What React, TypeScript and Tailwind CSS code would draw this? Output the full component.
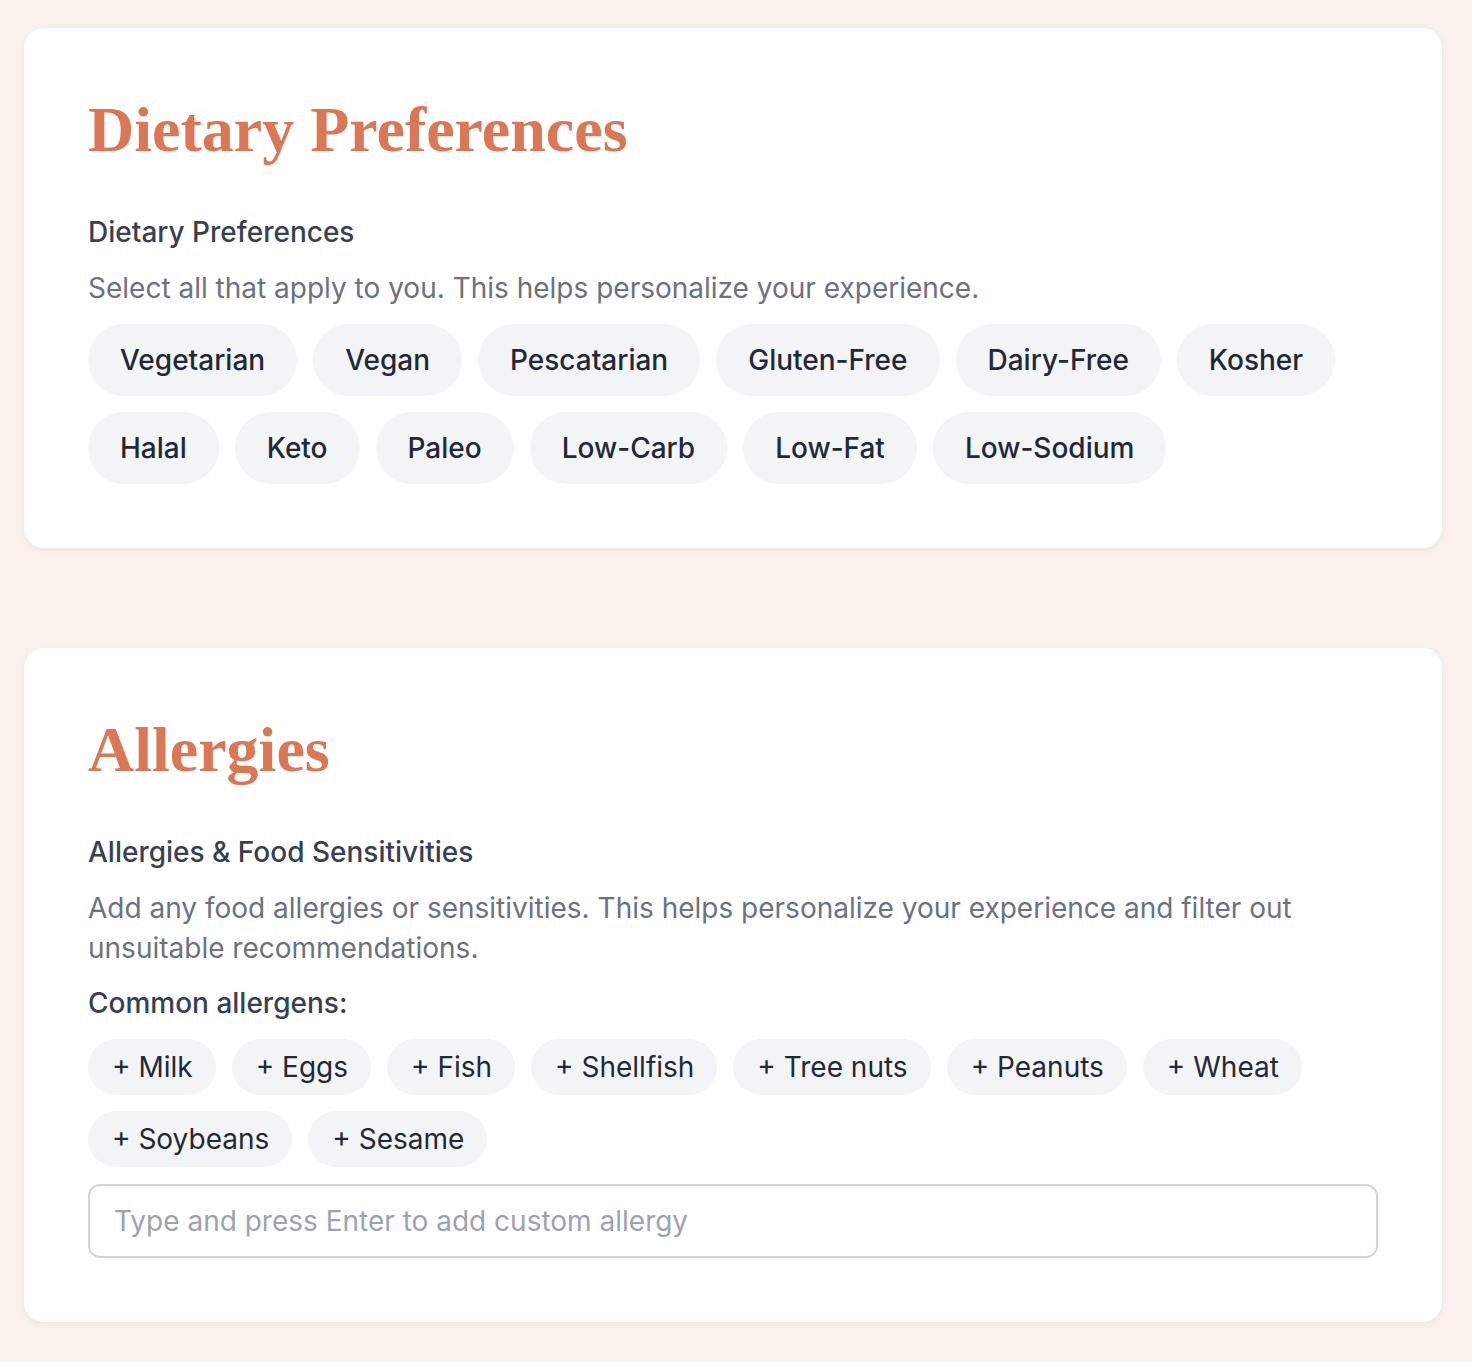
import React, { useState } from 'react';

const DIETS = [
  'Vegetarian',
  'Vegan',
  'Pescatarian',
  'Gluten-Free',
  'Dairy-Free',
  'Kosher',
  'Halal',
  'Keto',
  'Paleo',
  'Low-Carb',
  'Low-Fat',
  'Low-Sodium',
];

const ALLERGENS = ['Milk', 'Eggs', 'Fish', 'Shellfish', 'Tree nuts', 'Peanuts', 'Wheat', 'Soybeans', 'Sesame'];

const Card: React.FC<{ title: string; children: React.ReactNode }> = ({ title, children }) => (
  <section className="bg-white rounded-[20px] p-16 shadow-[0_2px_6px_rgba(214,140,115,0.14)]">
    <h2 className="font-['Liberation_Serif',serif] font-bold text-[64px] leading-[76px] text-[#d97757] mb-[46px]">
      {title}
    </h2>
    {children}
  </section>
);

export default function App() {
  const [selected, setSelected] = useState<string[]>([]);
  const [custom, setCustom] = useState('');

  const toggle = (d: string) =>
    setSelected((prev) => (prev.includes(d) ? prev.filter((x) => x !== d) : [...prev, d]));

  return (
    <div className="min-h-screen bg-[#faf1ec] pl-6 pr-[30px] pt-7 pb-9 font-['Inter',sans-serif]">
      <div className="flex flex-col gap-[100px]">
        <Card title="Dietary Preferences">
          <p className="text-[28px] leading-9 font-medium text-[#374151] mb-[18px]">Dietary Preferences</p>
          <p className="text-[28px] leading-10 text-[#6b7280] mb-4">
            Select all that apply to you. This helps personalize your experience.
          </p>
          <div className="flex flex-wrap gap-4">
            {DIETS.map((d) => (
              <button
                key={d}
                onClick={() => toggle(d)}
                className={`h-[72px] px-8 rounded-full text-[28px] font-medium ${
                  selected.includes(d) ? 'bg-[#d97757] text-white' : 'bg-[#f3f4f6] text-[#1f2937]'
                }`}
              >
                {d}
              </button>
            ))}
          </div>
        </Card>

        <Card title="Allergies">
          <p className="text-[28px] leading-9 font-medium text-[#374151] mb-[18px]">Allergies &amp; Food Sensitivities</p>
          <p className="text-[28px] leading-10 text-[#6b7280] mb-[17px]">
            Add any food allergies or sensitivities. This helps personalize your experience and filter out
            unsuitable recommendations.
          </p>
          <p className="text-[28px] leading-9 font-medium text-[#374151] mb-[18px]">Common allergens:</p>
          <div className="flex flex-wrap gap-4 mb-[17px]">
            {ALLERGENS.map((a) => (
              <button
                key={a}
                className="h-14 pl-6 pr-[23px] rounded-full bg-[#f3f4f6] text-[28px] text-[#1f2937]"
              >
                + {a}
              </button>
            ))}
          </div>
          <input
            value={custom}
            onChange={(e) => setCustom(e.target.value)}
            placeholder="Type and press Enter to add custom allergy"
            className="w-full h-[74px] px-6 rounded-xl border-2 border-[#d1d5db] text-[28px] text-[#1f2937] placeholder:text-[#9ca3af] outline-none"
          />
        </Card>
      </div>
    </div>
  );
}
